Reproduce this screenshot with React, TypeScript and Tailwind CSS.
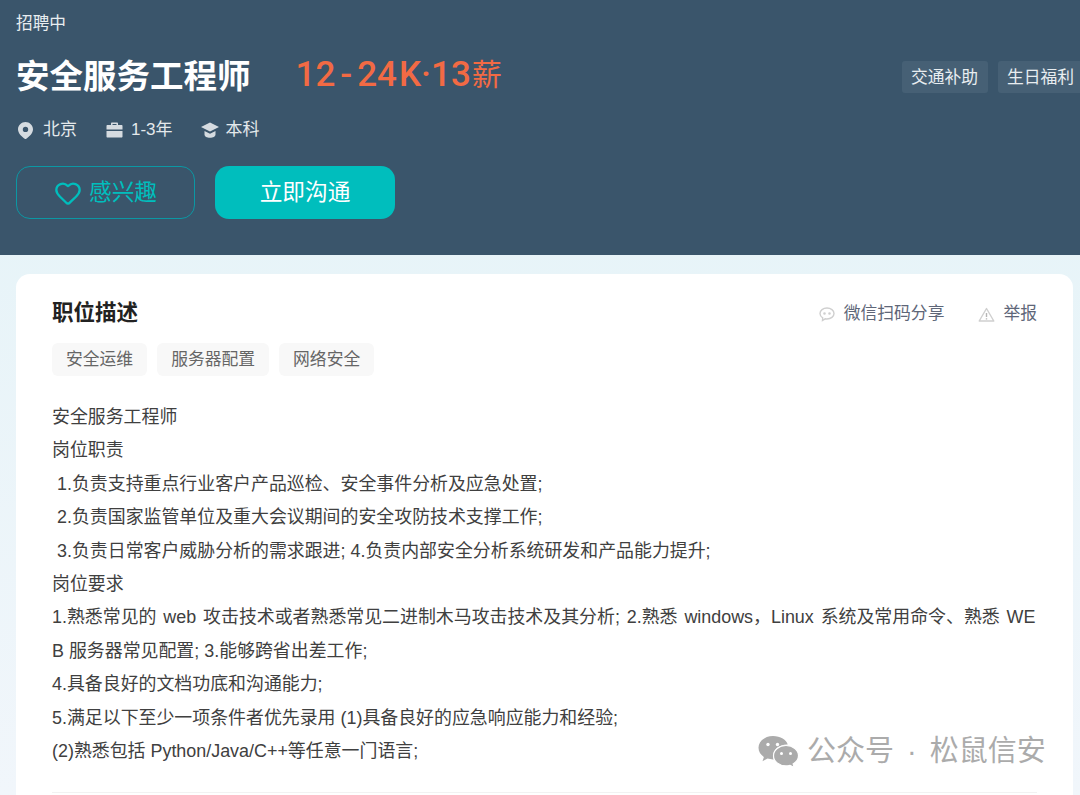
import React from "react";
import { Heart } from "lucide-react";

const font = { fontFamily: '"Liberation Sans", "Noto Sans CJK SC", sans-serif' };

const lines = [
  "安全服务工程师",
  "岗位职责",
  "\u00a01.负责支持重点行业客户产品巡检、安全事件分析及应急处置;",
  "\u00a02.负责国家监管单位及重大会议期间的安全攻防技术支撑工作;",
  "\u00a03.负责日常客户威胁分析的需求跟进; 4.负责内部安全分析系统研发和产品能力提升;",
  "岗位要求",
];

const lines2 = [
  "B 服务器常见配置; 3.能够跨省出差工作;",
  "4.具备良好的文档功底和沟通能力;",
  "5.满足以下至少一项条件者优先录用 (1)具备良好的应急响应能力和经验;",
  "(2)熟悉包括 Python/Java/C++等任意一门语言;",
];

export default function App() {
  return (
    <div style={font} className="relative h-[795px] w-[1080px] overflow-hidden bg-linear-to-b from-[#e3f3f7] to-[#f1f6fb]">
      <header className="relative h-[255px] bg-[#3a556b] px-4 pt-[13px] text-white">
        <div className="text-[16.7px] leading-[22px] text-[#e8edf0]">招聘中</div>
        <div className="mt-[18px] flex h-[48px] items-center">
          <h1 className="text-[33.5px] font-bold leading-[48px]">安全服务工程师</h1>
          <div className="ml-[45px] -mt-[4px] flex items-center font-['Roboto','Noto_Sans_CJK_SC',sans-serif] text-[35px] font-medium leading-[48px] text-[#f26a44]">
            <span>12</span>
            <span className="mx-[5px]">-</span>
            <span>24</span>
            <span className="ml-[2px]">K·13</span>
            <span className="ml-[1px] text-[30px] font-normal">薪</span>
          </div>
        </div>
        <div className="mt-[17px] flex h-[24px] items-center text-[17px] text-[#e4e9ec]">
          <svg className="ml-[2px]" width="15" height="17" viewBox="0 0 15 17">
            <path fill="#d5dbe0" fillRule="evenodd" d="M7.500 0C3.400 0 0 3.300 0 7.300c0 4.300 4.200 7.800 6.700 9.400.5.300 1.100.3 1.600 0C10.800 15.100 15 11.600 15 7.300 15 3.300 11.600 0 7.500 0Zm0 4.700a2.700 2.700 0 1 1 0 5.400 2.700 2.700 0 0 1 0-5.400Z" />
          </svg>
          <span className="ml-[10px]">北京</span>
          <svg className="ml-[29px]" width="17" height="16" viewBox="0 0 17 16" fill="#d5dbe0">
            <path d="M5 3V1.500C5 .9 5.500.5 6 .5h5c.5 0 1 .4 1 1V3h3.500c.6 0 1 .4 1 1v3.600H.5V4c0-.6.4-1 1-1H5Zm1.500 0h4V2h-4v1ZM.5 9h16v5.500c0 .6-.4 1-1 1h-14c-.6 0-1-.4-1-1V9Z" />
          </svg>
          <span className="ml-[8px]">1-3年</span>
          <svg className="ml-[28px]" width="18" height="16" viewBox="0 0 18 16" fill="#d5dbe0">
            <path d="M9 .5 18 5l-9 4.500L0 5 9 .5Z" />
            <path d="M3.500 9v3.500C3.500 14.500 6 15.800 9 15.800s5.500-1.300 5.500-3.300V9L9 11.700 3.500 9Z" />
          </svg>
          <span className="ml-[7px]">本科</span>
        </div>
        <div className="mt-[24px] flex gap-[20px]">
          <button className="flex h-[53px] w-[179px] items-center justify-center rounded-[14px] border border-[#0b98a4] text-[22.7px] text-[#00bebd]">
            <Heart className="h-[28px] w-[28px]" strokeWidth={2} />
            <span className="ml-[7px]">感兴趣</span>
          </button>
          <button className="flex h-[53px] w-[180px] items-center justify-center rounded-[14px] bg-[#00bebd] text-[22.7px] text-white">
            立即沟通
          </button>
        </div>
        <div className="absolute right-0 top-[61px] flex w-[178px] gap-[10px] overflow-hidden text-[16.8px] text-[#e8edf0]">
          <span className="h-[32px] w-[86px] shrink-0 rounded-[3px] bg-[#466075] pl-[9px] leading-[33px] whitespace-nowrap">交通补助</span>
          <span className="h-[32px] w-[86px] shrink-0 rounded-[3px] bg-[#466075] pl-[9px] leading-[33px] whitespace-nowrap">生日福利</span>
        </div>
      </header>

      <main className="ml-4 mt-[19px] h-[560px] w-[1057px] rounded-t-[14px] bg-white px-9 pt-[23px]">
        <div className="flex h-[32px] items-center">
          <h2 className="text-[21.5px] font-bold text-[#222222]">职位描述</h2>
          <div className="ml-auto mt-[2px] flex items-center text-[16.8px] text-[#5e6678]">
            <svg width="16" height="15" viewBox="0 0 16 15" fill="none" stroke="#cfcfcf" strokeWidth="1.400">
              <path d="M8 1C4.100 1 1 3.400 1 6.500c0 1.800 1 3.300 2.700 4.300L3.500 13.500l2.700-1.700c.6.1 1.200.2 1.800.2 3.900 0 7-2.500 7-5.500S11.900 1 8 1Z" />
              <circle cx="5.500" cy="6.500" r=".6" fill="#cfcfcf" />
              <circle cx="10.500" cy="6.500" r=".6" fill="#cfcfcf" />
            </svg>
            <span className="ml-[9px]">微信扫码分享</span>
            <svg className="ml-[34px]" width="17" height="15" viewBox="0 0 17 15" fill="none" stroke="#cfcfcf" strokeWidth="1.400">
              <path d="M8.500 1.500 1.200 14h14.600L8.500 1.500Z" strokeLinejoin="round" />
              <path d="M8.500 6v4M8.500 11.200v1.300" stroke="#b5b5b5" />
            </svg>
            <span className="ml-[8px]">举报</span>
          </div>
        </div>
        <div className="mt-[14px] flex gap-[10px] text-[16.8px] leading-[33px] text-[#666666]">
          <span className="h-[33px] rounded-[6px] bg-[#f8f8f8] px-[14px]">安全运维</span>
          <span className="h-[33px] rounded-[6px] bg-[#f8f8f8] px-[14px]">服务器配置</span>
          <span className="h-[33px] rounded-[6px] bg-[#f8f8f8] px-[14px]">网络安全</span>
        </div>
        <div className="mt-[25px] text-[17.92px] leading-[33.4px] text-[#404040]">
          {lines.map((line) => (
            <div key={line}>{line}</div>
          ))}
          <div className="whitespace-nowrap [word-spacing:1.9px]">
            1.熟悉常见的 web 攻击技术或者熟悉常见二进制木马攻击技术及其分析; 2.熟悉 windows，Linux 系统及常用命令、熟悉 WE
          </div>
          {lines2.map((line) => (
            <div key={line}>{line}</div>
          ))}
        </div>
        <div className="mt-[24px] h-px bg-[#f2f2f2]" />
      </main>

      <div className="absolute left-[758px] top-[735px] flex h-[33px] items-center text-[29px] leading-[33px] text-[#ababab] [word-spacing:5px]">
        <svg width="41" height="33" viewBox="0 0 41 33" fill="#ababab">
          <path d="M15 1C7 1 .5 6.300.5 12.800c0 3.700 2.100 7 5.400 9.100l-1.400 4.400 5-2.700c1.700.5 3.600.8 5.500.8h.8c-.4-1.200-.6-2.400-.6-3.700 0-6.300 6.100-11.300 13.600-11.300h.9C28.600 4.800 22.400 1 15 1Z" />
          <path d="M28 10.500c-7 0-12.500 4.600-12.500 10.200S21 30.900 28 30.900c1.400 0 2.800-.2 4.100-.6l4.200 2.300-1.200-3.700c3.300-1.900 5.400-4.800 5.400-8.200 0-5.600-5.500-10.200-12.500-10.200Z" stroke="#fff" strokeWidth="1.200" />
          <circle cx="10" cy="9.500" r="1.700" fill="#fff" />
          <circle cx="19.500" cy="9.500" r="1.700" fill="#fff" />
          <circle cx="23.500" cy="18.500" r="1.500" fill="#fff" />
          <circle cx="32.500" cy="18.500" r="1.500" fill="#fff" />
        </svg>
        <span className="ml-[8px] whitespace-nowrap">公众号 · 松鼠信安</span>
      </div>
    </div>
  );
}
